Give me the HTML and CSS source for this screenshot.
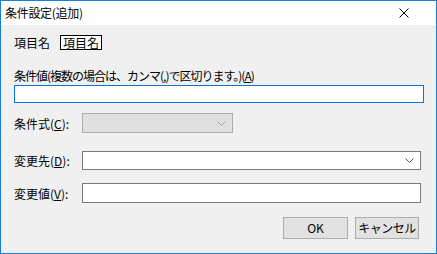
FILE: index.html
```
<!DOCTYPE html>
<html lang="ja">
<head>
    <meta charset="UTF-8">
    <title>条件設定(追加)</title>
    <link rel="stylesheet" href="styles.css">
</head>
<body>
    <div class="window">
        <div class="titlebar">
            <span class="title">条件設定(追加)</span>
            <svg class="close" width="10" height="10" viewBox="0 0 10 10">
                <path d="M0.5 0.5 L9.5 9.5 M9.5 0.5 L0.5 9.5" stroke="#000" stroke-width="1" fill="none"/>
            </svg>
        </div>

        <div class="content">
            <div class="row item-row">
                <span class="label">項目名</span>
                <span class="item-box">項目名</span>
            </div>

            <div class="value-label">条件値(複数の場合は、カンマ(,)で区切ります。)(<u>A</u>)</div>
            <div class="input focus wide"></div>

            <div class="row field-row r-cond">
                <span class="label fixed">条件式(<u>C</u>):</span>
                <div class="combo disabled short">
                    <svg class="arrow" width="9" height="5" viewBox="0 0 9 5"><path d="M0.5 0.5 L4.5 4.5 L8.5 0.5" stroke="#a0a0a0" fill="none"/></svg>
                </div>
            </div>

            <div class="row field-row r-dest">
                <span class="label fixed">変更先(<u>D</u>):</span>
                <div class="combo long">
                    <svg class="arrow" width="9" height="5" viewBox="0 0 9 5"><path d="M0.5 0.5 L4.5 4.5 L8.5 0.5" stroke="#555" fill="none"/></svg>
                </div>
            </div>

            <div class="row field-row r-val">
                <span class="label fixed">変更値(<u>V</u>):</span>
                <div class="input long"></div>
            </div>

            <div class="buttons">
                <div class="btn ok">OK</div>
                <div class="btn cancel">キャンセル</div>
            </div>
        </div>
    </div>
</body>
</html>
```

FILE: styles.css
```
*{
    margin: 0;
    padding: 0;
    box-sizing: border-box;
}
body{
    width: 437px;
    height: 254px;
    font-family: "Noto Sans CJK JP", "Liberation Sans", sans-serif;
    font-size: 12px;
    color: #000;
    background-color: #f0f0f0;
}
.window{
    width: 437px;
    height: 254px;
    border: 1px solid #1a7fd4;
    background-color: #f0f0f0;
}
.titlebar{
    height: 24px;
    background-color: #fff;
    display: flex;
    align-items: center;
    justify-content: space-between;
    padding: 0 27px 0 4px;
}
.title{
    line-height: 16px;
    letter-spacing: -0.3px;
}
.close{
    display: block;
}
.content{
    padding: 10px 0 0 13px;
}
.row{
    display: flex;
    align-items: center;
}
.item-row{
    height: 15px;
}
.label{
    line-height: 15px;
}
.item-row .label{
    width: 46px;
}
.item-box{
    height: 15px;
    line-height: 13px;
    padding: 0 2px;
    border: 1px solid #000;
    background-color: #fff;
}
.value-label{
    margin-top: 18px;
    line-height: 16px;
    letter-spacing: -1px;
}
u{
    text-decoration: underline;
    text-underline-offset: 1px;
}
.input{
    height: 18px;
    border: 1px solid #7a7a7a;
    background-color: #fff;
}
.input.focus{
    border-color: #0078d7;
}
.wide{
    margin-top: 1px;
    width: 410px;
}
.fixed{
    width: 68px;
}
.combo{
    height: 20px;
    border: 1px solid #7a7a7a;
    background-color: #fff;
    display: flex;
    align-items: center;
    justify-content: flex-end;
    padding-right: 6px;
}
.combo.disabled{
    background-color: #e0e0e0;
    border-color: #adadad;
}
.arrow{
    display: block;
}
.short{
    width: 151px;
}
.long{
    width: 339px;
}
.r-cond{
    margin-top: 10px;
}
.r-dest{
    margin-top: 18px;
}
.r-dest .combo{
    height: 19px;
}
.r-val{
    margin-top: 13px;
}
.r-val .input{
    height: 20px;
}
.buttons{
    margin-top: 14px;
    display: flex;
    justify-content: flex-end;
    gap: 7px;
    padding-right: 17px;
}
.btn{
    height: 22px;
    line-height: 20px;
    text-align: center;
    border: 1px solid #adadad;
    background-color: #e1e1e1;
}
.ok{
    width: 65px;
}
.cancel{
    width: 64px;
    letter-spacing: -0.5px;
}
```
